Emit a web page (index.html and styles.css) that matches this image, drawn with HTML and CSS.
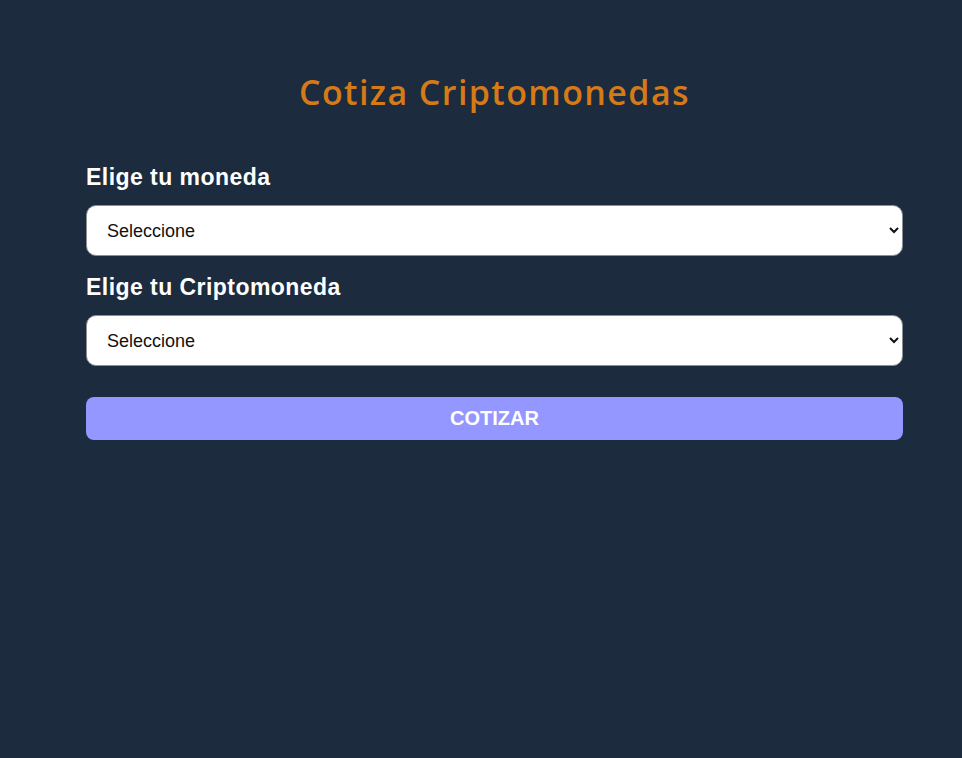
FILE: index.html
```html
<!DOCTYPE html>
<html lang="es">
<head>
<meta charset="utf-8">
<title>Cotiza Criptomonedas</title>
<link rel="stylesheet" href="styles.css">
</head>
<body>
<main class="page">
  <h1 class="title">Cotiza Criptomonedas</h1>
  <form class="form">
    <div class="field">
      <label class="label" for="moneda">Elige tu moneda</label>
      <select class="select" id="moneda"><option>Seleccione</option></select>
    </div>
    <div class="field">
      <label class="label" for="cripto">Elige tu Criptomoneda</label>
      <select class="select" id="cripto"><option>Seleccione</option></select>
    </div>
    <button class="button" type="button">Cotizar</button>
  </form>
</main>
</body>
</html>
```
FILE: styles.css
```css
html, body {
  margin: 0;
  padding: 0;
  background: #1c2b3e;
  min-height: 100%;
}
body {
  font-family: "Liberation Sans", Arial, sans-serif;
}
.page {
  width: 817px;
  margin-left: 86px;
  padding-top: 70px;
}
.title {
  margin: 0 0 50px;
  text-align: center;
  font-family: "Open Sans", sans-serif;
  font-weight: 600;
  font-size: 34px;
  line-height: 44px;
  letter-spacing: 1.4px;
  color: #d47a17;
}
.form {
  display: flex;
  flex-direction: column;
}
.field {
  display: flex;
  flex-direction: column;
}
.label {
  color: #ffffff;
  font-weight: 700;
  font-size: 23px;
  line-height: 26px;
  letter-spacing: 0.45px;
  margin-bottom: 15px;
}
.select {
  height: 51px;
  border: 1px solid #8a8f96;
  border-radius: 10px;
  background: #ffffff;
  font-family: "Liberation Sans", Arial, sans-serif;
  font-size: 18px;
  color: #111;
  padding: 0 12px 0 16px;
  margin-bottom: 18px;
}
.field:last-of-type .select {
  margin-bottom: 31px;
}
.button {
  height: 43px;
  border: none;
  border-radius: 8px;
  background: #9497ff;
  color: #ffffff;
  font-family: "Liberation Sans", Arial, sans-serif;
  font-weight: 700;
  font-size: 20px;
  text-transform: uppercase;
  cursor: pointer;
}
```
